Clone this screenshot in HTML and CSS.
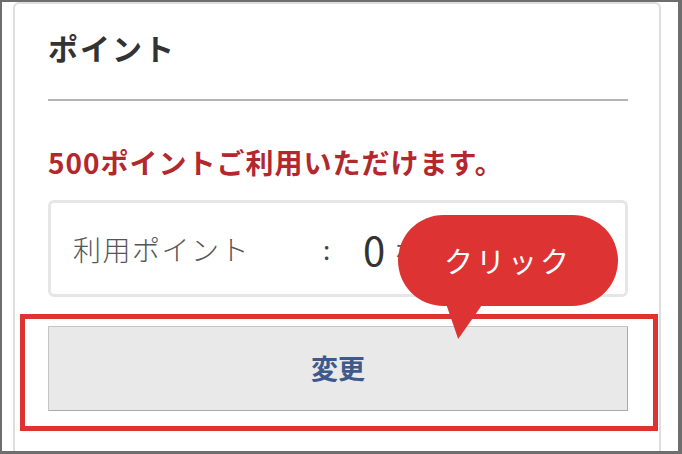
FILE: index.html
```html
<!DOCTYPE html>
<html lang="ja">
<head>
<meta charset="utf-8">
<link rel="stylesheet" href="styles.css">
</head>
<body>
<div class="frame">
  <div class="card">
    <h2 class="title">ポイント</h2>
    <p class="notice">500ポイントご利用いただけます。</p>
    <div class="field">
      <span class="label">利用ポイント</span>
      <span class="colon">:</span>
      <span class="value">0</span>
      <span class="unit">ポイント</span>
    </div>
    <div class="highlight">
      <button class="btn" type="button">変更</button>
    </div>
    <div class="bubble">クリック</div>
  </div>
</div>
</body>
</html>
```
FILE: styles.css
```css
* { box-sizing: border-box; }
html, body { margin: 0; padding: 0; background: #fff; }
body {
  font-family: "Noto Sans CJK JP", "Noto Sans", sans-serif;
  width: 682px;
  height: 454px;
  overflow: hidden;
}
.frame {
  width: 682px;
  height: 454px;
  border-style: solid;
  border-color: #6e6e6e;
  border-width: 2px 4px 3px 2px;
  background: #fff;
  overflow: hidden;
}
.card {
  position: relative;
  margin-left: 11px;
  width: 648px;
  height: 480px;
  border: 2px solid #dedede;
  border-radius: 6px 6px 0 0;
  padding: 25px 31px 0 33px;
}
.title {
  margin: 0;
  font-size: 30px;
  line-height: 36px;
  font-weight: 700;
  letter-spacing: 2px;
  color: #333;
  padding-bottom: 34px;
  border-bottom: 2px solid #b4b4b4;
}
.notice {
  margin: 41px 0 18px;
  font-size: 28px;
  line-height: 40px;
  font-weight: 700;
  letter-spacing: 1px;
  color: #b3282d;
}
.field {
  height: 97px;
  border: 3px solid #e6e6e6;
  border-radius: 6px;
  display: flex;
  align-items: center;
  padding-left: 22px;
  color: #555;
}
.label {
  width: 250px;
  font-size: 28px;
  font-weight: 300;
  letter-spacing: 1.5px;
  color: #555;
}
.colon {
  width: 40px;
  font-size: 26px;
  color: #444;
}
.value {
  font-size: 40px;
  font-weight: 400;
  color: #333;
  margin-right: 10px;
}
.unit {
  font-size: 24px;
  color: #555;
}
.highlight {
  margin: 17px -30px 0 -28px;
  border: 5px solid #dd3333;
  padding: 7px 25px 15px 23px;
}
.btn {
  display: block;
  width: 100%;
  height: 85px;
  background: #e9e9e9;
  border: 1px solid #c4c4c4;
  border-right-color: #a9a9a9;
  border-bottom-color: #a9a9a9;
  border-radius: 1px;
  font-family: "Noto Sans CJK JP", sans-serif;
  font-size: 27px;
  font-weight: 700;
  color: #3c5a8e;
  padding: 0 0 3px;
}
.bubble {
  position: absolute;
  left: 383px;
  top: 211px;
  width: 220px;
  height: 91px;
  border-radius: 46px;
  background: #dd3333;
  color: #fff;
  font-size: 29px;
  letter-spacing: 3px;
  line-height: 91px;
  text-align: center;
}
.bubble::after {
  content: "";
  position: absolute;
  left: 45px;
  top: 80px;
  width: 46px;
  height: 44px;
  background: #dd3333;
  clip-path: polygon(0 0, 100% 0, 33% 100%);
}
```
